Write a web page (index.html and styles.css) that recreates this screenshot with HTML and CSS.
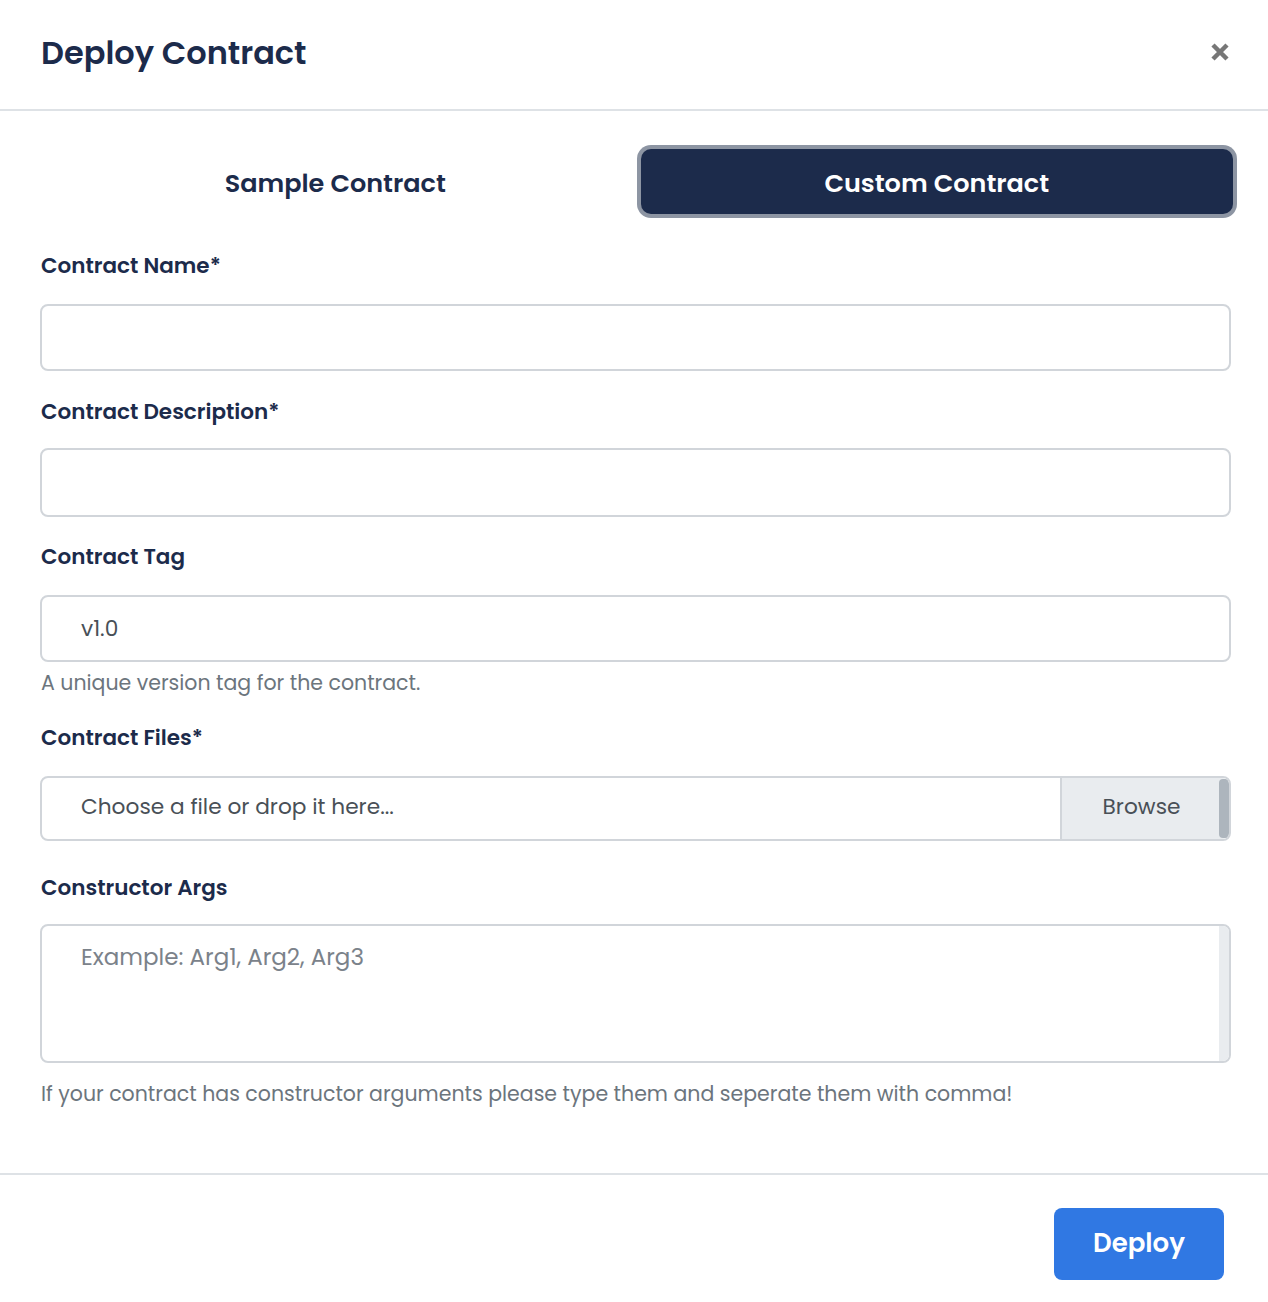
FILE: index.html
```html
<!DOCTYPE html>
<html lang="en">
<head>
<meta charset="utf-8">
<title>Deploy Contract</title>
<link rel="stylesheet" href="styles.css">
</head>
<body>
<div class="modal">
  <header class="modal-header">
    <h1 class="modal-title">Deploy Contract</h1>
    <button class="close" aria-label="Close">
      <svg width="20" height="20" viewBox="0 0 20 20"><path d="M3 3 L17 17 M17 3 L3 17" stroke="#777" stroke-width="4.5" stroke-linecap="butt"/></svg>
    </button>
  </header>
  <main class="modal-body">
    <div class="tabs">
      <button class="tab">Sample Contract</button>
      <button class="tab tab-active">Custom Contract</button>
    </div>

    <label class="label l-name">Contract Name*</label>
    <div class="input i-name"></div>

    <label class="label l-desc">Contract Description*</label>
    <div class="input i-desc"></div>

    <label class="label l-tag">Contract Tag</label>
    <div class="input i-tag"><span class="value">v1.0</span></div>
    <p class="help h-tag">A unique version tag for the contract.</p>

    <label class="label l-files">Contract Files*</label>
    <div class="input file i-files">
      <span class="file-text">Choose a file or drop it here...</span>
      <span class="browse">Browse<span class="grip"></span></span>
    </div>

    <label class="label l-args">Constructor Args</label>
    <div class="input textarea">
      <span class="placeholder">Example: Arg1, Arg2, Arg3</span>
      <span class="track"></span>
    </div>
    <p class="help h-args">If your contract has constructor arguments please type them and seperate them with comma!</p>
  </main>
  <footer class="modal-footer">
    <button class="deploy">Deploy</button>
  </footer>
</div>
</body>
</html>
```

FILE: styles.css
```css
* { box-sizing: border-box; }
html, body { margin: 0; padding: 0; background: #fff; }
body {
  font-family: "Poppins", "Inter", "Noto Sans", sans-serif;
  color: #1c2b4b;
}
.modal { width: 1268px; min-height: 1302px; display: flex; flex-direction: column; }

.modal-header {
  height: 111px;
  border-bottom: 2px solid #dee2e6;
  display: flex;
  align-items: center;
  justify-content: space-between;
  padding: 0 38px 4px 41px;
}
.modal-title {
  margin: 0;
  font-size: 32px;
  font-weight: 600;
  color: #1c2b4b;
}
.close {
  border: 0; background: none; padding: 0; width: 20px; height: 20px;
  display: block;
  margin-top: -2px;
}
.close svg { display: block; }

.modal-body { padding: 38px 37px 0 40px; display: flex; flex-direction: column; }

.tabs {
  display: grid;
  grid-template-columns: 1fr 1fr;
  gap: 9px;
  margin: 0 -2px 0 -1px;
  height: 65px;
}
.tab {
  border: 0;
  background: none;
  font-family: inherit;
  font-size: 25.5px;
  font-weight: 600;
  color: #1c2b4b;
  border-radius: 10px;
  padding: 4px 0 0;
}
.tab-active {
  background: #1c2b4b;
  color: #fff;
  box-shadow: 0 0 0 4px #8d95a3;
}

.label {
  display: block;
  font-size: 21.5px;
  line-height: 30px;
  font-weight: 600;
  margin-left: 1px;
}
.l-name { margin-top: 37px; }
.l-desc { margin-top: 26px; }
.l-tag { margin-top: 25px; }
.l-files { margin-top: 27px; }
.l-args { margin-top: 32px; }

.input {
  border: 2px solid #d1d5da;
  border-radius: 8px;
  height: 67px;
  display: flex;
  align-items: center;
  padding-left: 39px;
  font-size: 21.7px;
  color: #495057;
}
.i-name { margin-top: 23px; }
.i-desc { margin-top: 21px; height: 69px; }
.i-tag { margin-top: 23px; }
.i-files { margin-top: 23px; height: 65px; padding-left: 0; overflow: hidden; }
.file-text { flex: 1; padding-left: 39px; padding-bottom: 5px; }
.browse {
  position: relative;
  width: 169px;
  align-self: stretch;
  background: #e9ecef;
  border-left: 2px solid #d1d5da;
  display: flex;
  align-items: center;
  justify-content: center;
  padding: 0 8px 5px 0;
  color: #495057;
}
.grip {
  position: absolute;
  right: 0; top: 1px; bottom: 1px;
  width: 10px;
  background: #adb5bd;
  border-radius: 4px;
}

.textarea {
  position: relative;
  margin-top: 21px;
  height: 139px;
  align-items: flex-start;
  padding-top: 14px;
  font-size: 23px;
}
.placeholder { color: #7b828a; }
.track {
  position: absolute;
  right: 0; top: 0; bottom: 0;
  width: 10px;
  background: #e9ecef;
  border-radius: 0 6px 6px 0;
}

.help {
  margin: 0;
  font-size: 20.5px;
  line-height: 26px;
  color: #6c757d;
  margin-left: 1px;
}
.h-tag { margin-top: 8px; }
.h-args { margin-top: 18px; }

.modal-footer {
  margin-top: 66px;
  border-top: 2px solid #dee2e6;
  display: flex;
  justify-content: flex-end;
  padding: 33px 44px 0 0;
}
.deploy {
  width: 170px;
  height: 72px;
  border: 0;
  border-radius: 8px;
  background: #3078e3;
  color: #fff;
  font-family: inherit;
  font-size: 26px;
  font-weight: 600;
  padding: 0 0 2px;
}
```
